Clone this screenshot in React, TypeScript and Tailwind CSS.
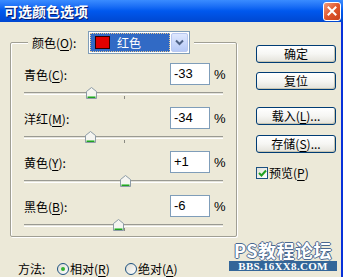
import React from "react";

const channels = [
  { name: "青色", key: "C", value: -33, text: "-33" },
  { name: "洋红", key: "M", value: -34, text: "-34" },
  { name: "黄色", key: "Y", value: 1, text: "+1" },
  { name: "黑色", key: "B", value: -6, text: "-6" },
];

function Mn({ pre, k, post = "" }: { pre: string; k: string; post?: string }) {
  return (
    <span className="whitespace-nowrap">
      {pre}(<span className="underline underline-offset-[2px] decoration-[1px]">{k}</span>){post}
    </span>
  );
}

function Thumb() {
  return (
    <svg width="11" height="12" viewBox="0 0 11 12">
      <path d="M0.5 11.5 V4.5 L5.5 0.5 L10.5 4.5 V11.5 Z" fill="#f5f5f1" stroke="#8d9ba6" />
      <path d="M1.5 9.5 H9.5" stroke="#7fd27f" />
      <path d="M1.5 10.5 H9.5" stroke="#21a121" />
    </svg>
  );
}

function Slider({ value }: { value: number }) {
  const left = 100 + value - 5;
  return (
    <div className="relative h-[22px] w-[199px]">
      <div className="absolute left-0 right-0 top-[7px] h-[3px] bg-[#e4e3da] border-t border-b border-t-[#9a9a92] border-b-white" />
      <div className="absolute left-[100px] top-[11px] w-[1px] h-[3px] bg-[#8a8a82]" />
      <div className="absolute top-[2px]" style={{ left }}>
        <Thumb />
      </div>
    </div>
  );
}

function XPButton({ children }: { children: React.ReactNode }) {
  return (
    <div className="w-[80px] h-[18px] rounded-[3px] border border-[#003c74] bg-linear-to-b from-white via-[#f6f6f3] to-[#e3e2da] shadow-[inset_-1px_-1px_0_#c7c5b2] flex items-center justify-center text-[12px] leading-[12px] text-black">
      {children}
    </div>
  );
}

export default function App() {
  return (
    <div className="relative w-[343px] h-[277px] overflow-hidden bg-[#ece9d8] flex flex-col font-['Noto_Sans_CJK_SC',sans-serif] text-[12px] text-black">
      {/* Title bar */}
      <div className="h-[24px] flex items-center pl-[4px] pr-[2px] bg-linear-to-b from-[#3a8cff] via-[#0058ee] to-[#0047d0]">
        <span className="text-white font-bold text-[14px] leading-[14px] tracking-[0px] [text-shadow:1px_1px_0_#0a1e6e]">
          可选颜色选项
        </span>
        <div className="ml-auto w-[18px] h-[19px] rounded-[3px] border border-white bg-linear-to-br from-[#f09a7a] via-[#e0562c] to-[#c8401c] flex items-center justify-center">
          <svg width="10" height="10" viewBox="0 0 10 10">
            <path d="M1.5 1.5 L8.5 8.5 M8.5 1.5 L1.5 8.5" stroke="white" strokeWidth="2" strokeLinecap="square" />
          </svg>
        </div>
      </div>

      {/* Body */}
      <div className="flex-1 flex border-r-2 border-[#0831d9]">
        {/* Left column */}
        <div className="w-[256px] flex flex-col">
          <div className="relative ml-[10px] mt-[20px] w-[227px] h-[195px] border border-[#a09f94] rounded-[2px] shadow-[inset_1px_1px_0_#ffffff,1px_1px_0_#ffffff] pt-[20px] pl-[13px] pr-[12px]">
            {/* Legend */}
            <div className="absolute left-[17px] top-[-12px] flex items-start bg-[#ece9d8] px-[4px]">
              <span className="mt-[5px] leading-[14px] w-[56px]">
                <Mn pre="颜色" k="O" post=":" />
              </span>
              <div className="w-[102px] h-[23px] border border-[#7f9db9] bg-white p-[1px] flex">
                <div className="flex-1 bg-[#316ac5] outline-1 outline-dotted outline-[#e8c890] -outline-offset-1 flex items-center pl-[5px] gap-[7px]">
                  <div className="w-[15px] h-[13px] bg-[#e20000] border border-[#300000]" />
                  <span className="text-white leading-[12px]">红色</span>
                </div>
                <div className="w-[17px] ml-[1px] rounded-[2px] border border-[#b8c8f0] bg-linear-to-b from-[#dfe8ff] to-[#b6c9f6] flex items-center justify-center">
                  <svg width="9" height="7" viewBox="0 0 9 7">
                    <path d="M1 1.5 L4.5 5 L8 1.5" fill="none" stroke="#4d6185" strokeWidth="2" />
                  </svg>
                </div>
              </div>
            </div>

            {channels.map((c) => (
              <div key={c.key} className="h-[44px] flex flex-col">
                <div className="h-[22px] flex items-center justify-between">
                  <span className="leading-[14px] mt-[2px]">
                    <Mn pre={c.name} k={c.key} post=":" />
                  </span>
                  <div className="flex items-center">
                    <div className="w-[40px] h-[22px] bg-white border border-[#7f9db9] flex items-center pl-[3px] font-['Liberation_Sans',sans-serif] text-[13px]">
                      {c.text}
                    </div>
                    <span className="ml-[4px] w-[10px] font-['Liberation_Sans',sans-serif] text-[13px] leading-[13px]">%</span>
                  </div>
                </div>
                <Slider value={c.value} />
              </div>
            ))}
          </div>

          {/* Method row */}
          <div className="mt-[24px] h-[16px] pl-[18px] flex items-center">
            <span className="w-[39px] leading-[14px]">方法:</span>
            <div className="w-[68px] flex items-center">
              <div className="w-[12px] h-[12px] rounded-full border border-[#1c5180] bg-linear-to-br from-[#dcdcd4] to-white flex items-center justify-center">
                <div className="w-[4px] h-[4px] rounded-full bg-[#31b031]" />
              </div>
              <span className="ml-[1px] leading-[14px]">
                <Mn pre="相对" k="R" />
              </span>
            </div>
            <div className="flex items-center">
              <div className="w-[12px] h-[12px] rounded-full border border-[#1c5180] bg-linear-to-br from-[#dcdcd4] to-white" />
              <span className="ml-[1px] leading-[14px]">
                <Mn pre="绝对" k="A" />
              </span>
            </div>
          </div>
        </div>

        {/* Right column */}
        <div className="flex flex-col pt-[23px]">
          <XPButton>确定</XPButton>
          <div className="mt-[9px]">
            <XPButton>复位</XPButton>
          </div>
          <div className="mt-[17px]">
            <XPButton>
              <Mn pre="载入" k="L" post="..." />
            </XPButton>
          </div>
          <div className="mt-[10px]">
            <XPButton>
              <Mn pre="存储" k="S" post="..." />
            </XPButton>
          </div>
          <div className="mt-[13px] flex items-center">
            <div className="w-[12px] h-[12px] border border-[#1c5180] bg-linear-to-br from-[#e0e0d8] to-white flex items-center justify-center">
              <svg width="9" height="8" viewBox="0 0 9 8">
                <path d="M1 4 L3.5 6.5 L8 1.5" fill="none" stroke="#21a121" strokeWidth="2" />
              </svg>
            </div>
            <span className="ml-[1px] leading-[14px]">
              <Mn pre="预览" k="P" />
            </span>
          </div>
        </div>
      </div>

      {/* Watermark */}
      <div className="absolute left-[229px] top-[241px] w-[108px] flex flex-col items-stretch">
        <div className="h-[18px] flex items-center justify-center text-white font-bold text-[18px] leading-[18px] tracking-[0.5px] [text-shadow:1px_0_#4a6890,-1px_0_#4a6890,0_1px_#4a6890,0_-1px_#4a6890]">
          PS教程论坛
        </div>
        <div className="mt-[2px] h-[10px] bg-[#336699] flex items-center justify-center text-white font-bold font-['Liberation_Serif',serif] text-[11px] leading-[10px] tracking-[0.3px]">
          BBS.16XX8.COM
        </div>
      </div>
    </div>
  );
}
